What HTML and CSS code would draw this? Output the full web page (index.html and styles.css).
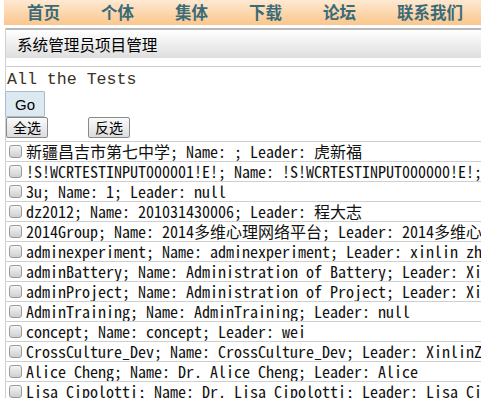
FILE: index.html
```html
<!DOCTYPE html>
<html lang="zh-CN">
<head>
  <meta charset="UTF-8" />
  <title>系统管理员项目管理</title>
  <link rel="stylesheet" href="styles.css">
</head>
<body>
  <div class="nav">
    <a href="#">首页</a>
    <a href="#">个体</a>
    <a href="#">集体</a>
    <a href="#">下载</a>
    <a href="#">论坛</a>
    <a href="#">联系我们</a>
  </div>

  <div class="panel">
    <div class="panel-title">系统管理员项目管理</div>
    <div class="tests">All the Tests</div>
    <button class="go">Go</button>
    <div class="sel">
      <button>全选</button>
      <button>反选</button>
    </div>
    <ul class="lista">
      <li><input type="checkbox">新疆昌吉市第七中学; Name: ; Leader: 虎新福</li>
      <li><input type="checkbox">!S!WCRTESTINPUT000001!E!; Name: !S!WCRTESTINPUT000000!E!; Leader: !S!WCRTESTINPUT000002!E!</li>
      <li><input type="checkbox">3u; Name: 1; Leader: null</li>
      <li><input type="checkbox">dz2012; Name: 201031430006; Leader: 程大志</li>
      <li><input type="checkbox">2014Group; Name: 2014多维心理网络平台; Leader: 2014多维心理网络平台</li>
      <li><input type="checkbox">adminexperiment; Name: adminexperiment; Leader: xinlin zhang</li>
      <li><input type="checkbox">adminBattery; Name: Administration of Battery; Leader: XinlinZhang</li>
      <li><input type="checkbox">adminProject; Name: Administration of Project; Leader: XinlinZhang</li>
      <li><input type="checkbox">AdminTraining; Name: AdminTraining; Leader: null</li>
      <li><input type="checkbox">concept; Name: concept; Leader: wei</li>
      <li><input type="checkbox">CrossCulture_Dev; Name: CrossCulture_Dev; Leader: XinlinZhang</li>
      <li><input type="checkbox">Alice Cheng; Name: Dr. Alice Cheng; Leader: Alice</li>
      <li><input type="checkbox">Lisa Cipolotti; Name: Dr. Lisa Cipolotti; Leader: Lisa Cipolotti</li>
    </ul>
  </div>
</body>
</html>
```

FILE: styles.css
```css
* { box-sizing: border-box; }
body {
  margin: 0; overflow: hidden;
  font-family: "Noto Sans CJK SC", sans-serif;
  background: #fff; color: #000;
}
.nav {
  margin-left: 4px; height: 25px;
  display: flex; align-items: center; gap: 41px;
  padding-left: 23px;
  background: linear-gradient(to bottom, #fde9d2, #fbc68c);
  white-space: nowrap;
}
.nav a {
  color: #3a6b78; font-weight: bold; font-size: 16.5px;
  text-decoration: none; line-height: 25px;
}
.panel {
  margin: 3px 0 0 5px;
  border-left: 1px solid #d0d0d0;
}
.panel-title {
  border-top: 2px solid #b8b8b8;
  height: 30px; line-height: 29px;
  padding-left: 11px; font-size: 15.6px;
  background: linear-gradient(to bottom, #ffffff, #dedede);
}
.tests {
  margin-top: 8px; border-top: 1px solid #cfcfcf;
  height: 25px; line-height: 25px; padding-left: 1px;
  font-family: "Liberation Mono", monospace; font-size: 16.6px;
  color: #3a3328;
}
.go {
  display: block; width: 40px; height: 26px;
  margin: 0 0 0 -1px; padding: 0;
  font: 15px "Liberation Sans", sans-serif;
  background: #dce9f1; border: 1px solid #a9bccb; border-radius: 1px;
}
.sel { display: flex; gap: 40px; height: 22px; }
.sel button {
  width: 42px; height: 21px; padding: 0;
  font: 14px "Noto Sans CJK SC", sans-serif; line-height: 19px;
  background: linear-gradient(to bottom, #fafafa, #dcdcdc);
  border: 1px solid #8a8a8a; border-radius: 2px;
}
.lista {
  list-style: none; margin: 2px 0 0; padding: 0;
  border-top: 1px solid #cfcfcf;
}
.lista li {
  height: 20px; line-height: 19px;
  border-bottom: 1px solid #cfcfcf;
  white-space: nowrap; overflow: hidden;
  font-family: "Noto Sans Mono CJK SC", "Liberation Mono", "Noto Sans CJK SC", monospace;
  font-size: 16px; color: #111;
  display: flex; align-items: center;
}
.lista input {
  appearance: none; -webkit-appearance: none;
  width: 13px; height: 13px; margin: 0 4px 0 3px; flex: none;
  border: 1px solid #9a9a9a; border-radius: 3px;
  background: linear-gradient(to bottom, #f4f4f4, #cfcfcf);
}
```
